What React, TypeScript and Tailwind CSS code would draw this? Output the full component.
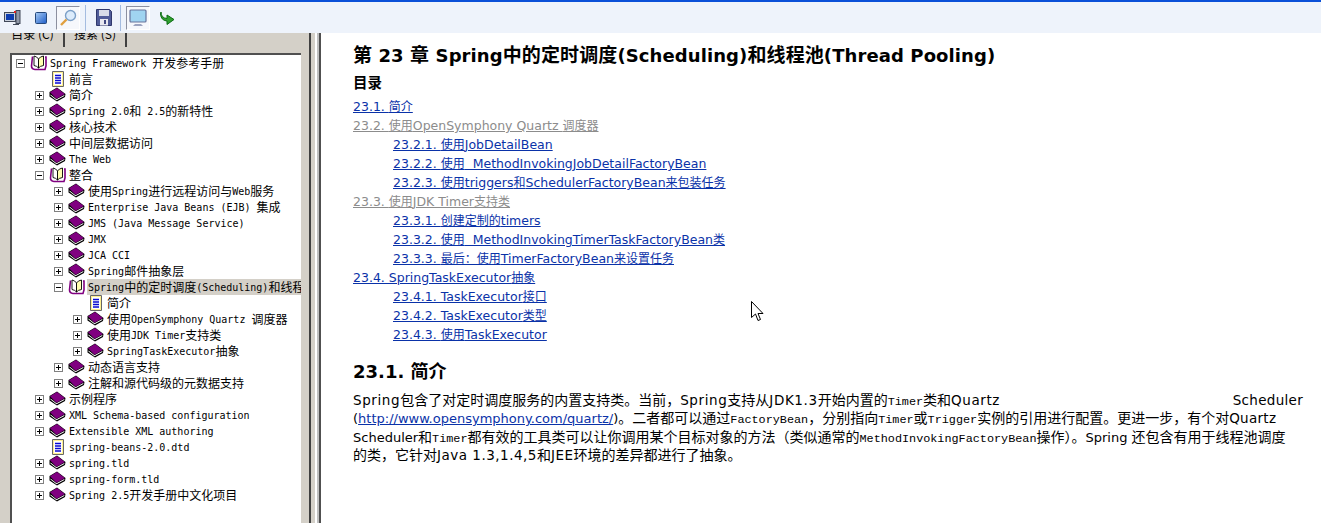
import React from 'react';

type Kind = 'book' | 'open' | 'doc';

interface TreeRow {
  level: number;
  kind: Kind;
  label: string;
  expander?: '+' | '-';
  selected?: boolean;
}

const rows: TreeRow[] = [
  { level: 0, kind: 'open', label: 'Spring Framework 开发参考手册', expander: '-' },
  { level: 1, kind: 'doc', label: '前言' },
  { level: 1, kind: 'book', label: '简介', expander: '+' },
  { level: 1, kind: 'book', label: 'Spring 2.0和 2.5的新特性', expander: '+' },
  { level: 1, kind: 'book', label: '核心技术', expander: '+' },
  { level: 1, kind: 'book', label: '中间层数据访问', expander: '+' },
  { level: 1, kind: 'book', label: 'The Web', expander: '+' },
  { level: 1, kind: 'open', label: '整合', expander: '-' },
  { level: 2, kind: 'book', label: '使用Spring进行远程访问与Web服务', expander: '+' },
  { level: 2, kind: 'book', label: 'Enterprise Java Beans (EJB) 集成', expander: '+' },
  { level: 2, kind: 'book', label: 'JMS (Java Message Service)', expander: '+' },
  { level: 2, kind: 'book', label: 'JMX', expander: '+' },
  { level: 2, kind: 'book', label: 'JCA CCI', expander: '+' },
  { level: 2, kind: 'book', label: 'Spring邮件抽象层', expander: '+' },
  { level: 2, kind: 'open', label: 'Spring中的定时调度(Scheduling)和线程池(Thread Pooling)', expander: '-', selected: true },
  { level: 3, kind: 'doc', label: '简介' },
  { level: 3, kind: 'book', label: '使用OpenSymphony Quartz 调度器', expander: '+' },
  { level: 3, kind: 'book', label: '使用JDK Timer支持类', expander: '+' },
  { level: 3, kind: 'book', label: 'SpringTaskExecutor抽象', expander: '+' },
  { level: 2, kind: 'book', label: '动态语言支持', expander: '+' },
  { level: 2, kind: 'book', label: '注解和源代码级的元数据支持', expander: '+' },
  { level: 1, kind: 'book', label: '示例程序', expander: '+' },
  { level: 1, kind: 'book', label: 'XML Schema-based configuration', expander: '+' },
  { level: 1, kind: 'book', label: 'Extensible XML authoring', expander: '+' },
  { level: 1, kind: 'doc', label: 'spring-beans-2.0.dtd' },
  { level: 1, kind: 'book', label: 'spring.tld', expander: '+' },
  { level: 1, kind: 'book', label: 'spring-form.tld', expander: '+' },
  { level: 1, kind: 'book', label: 'Spring 2.5开发手册中文化项目', expander: '+' },
];

const toc: { label: string; sub?: boolean; visited?: boolean }[] = [
  { label: '23.1. 简介' },
  { label: '23.2. 使用OpenSymphony Quartz 调度器', visited: true },
  { label: '23.2.1. 使用JobDetailBean', sub: true },
  { label: '23.2.2. 使用\u00a0 MethodInvokingJobDetailFactoryBean', sub: true },
  { label: '23.2.3. 使用triggers和SchedulerFactoryBean来包装任务', sub: true },
  { label: '23.3. 使用JDK Timer支持类', visited: true },
  { label: '23.3.1. 创建定制的timers', sub: true },
  { label: '23.3.2. 使用\u00a0 MethodInvokingTimerTaskFactoryBean类', sub: true },
  { label: '23.3.3. 最后：使用TimerFactoryBean来设置任务', sub: true },
  { label: '23.4. SpringTaskExecutor抽象' },
  { label: '23.4.1. TaskExecutor接口', sub: true },
  { label: '23.4.2. TaskExecutor类型', sub: true },
  { label: '23.4.3. 使用TaskExecutor', sub: true },
];

const indent = ['pl-[4px]', 'pl-[23px]', 'pl-[42px]', 'pl-[61px]'];

const BookIcon = () => (
  <svg width="18" height="16" viewBox="0 0 18 16" className="shrink-0">
    <path d="M0.5 5 L8 0.5 L16.5 7 L16 10 L8 14.5 L0.5 9.5 Z" fill="#000" />
    <path d="M1.5 8.5 L7.5 13.3 L15.3 9 L15.3 8 L7.5 12.3 L1.5 7.5 Z" fill="#fff" />
    <path d="M1 5.3 L8 1 L15.8 7.1 L7.5 11.8 Z" fill="#800080" />
  </svg>
);

const OpenBookIcon = () => (
  <svg width="18" height="16" viewBox="0 0 18 16" className="shrink-0">
    <path d="M2.5 1.5 L1.5 11 Q1.5 14 5 14.5 L15 14.5 L16 11 L16 2 L15 2" fill="none" stroke="#800080" strokeWidth="1.6" />
    <path d="M4 1 Q7 1.5 8.5 4 L8.5 13 Q7 11 4 10.5 Z" fill="#fff" stroke="#000" strokeWidth="0.9" />
    <path d="M13.5 1 Q10 1.5 8.5 4 L8.5 13 Q10 11 13.5 10.5 Z" fill="#ffffb0" stroke="#000" strokeWidth="0.9" />
  </svg>
);

const DocIcon = () => (
  <svg width="18" height="16" viewBox="0 0 18 16" className="shrink-0">
    <path d="M3.5 0.5 H14.5 V15.5 H3.5 Z" fill="#fff" stroke="#666" />
    <path d="M4.5 1.5 H13.5 V14.5 H4.5 Z" fill="none" stroke="#ffe020" strokeDasharray="1 1" />
    <path d="M6 4.5 H12 M6 7 H12 M6 9.5 H12 M6 12 H12" stroke="#0808d0" strokeWidth="1.3" />
  </svg>
);

const Expander = ({ type }: { type?: '+' | '-' }) => (
  <span className="flex h-[16px] w-[14px] shrink-0 items-center">
    {type && (
      <svg width="9" height="9" viewBox="0 0 9 9">
        <rect x="0.5" y="0.5" width="8" height="8" fill="#fff" stroke="#808080" />
        <path d="M2 4.5 H7" stroke="#000" />
        {type === '+' && <path d="M4.5 2 V7" stroke="#000" />}
      </svg>
    )}
  </span>
);

const CJK = /([\u3000-\u303f\u4e00-\u9fff\uff00-\uffef]+)/;

// CJK runs get their own size, the browser fonts here are not as wide as the original ones
const Split = ({ text, cjkClass, latinClass }: { text: string; cjkClass: string; latinClass?: string }) => (
  <>
    {text.split(CJK).map((part, i) =>
      CJK.test(part) ? (
        <span key={i} className={cjkClass}>{part}</span>
      ) : (
        <span key={i} className={latinClass}>{part}</span>
      ),
    )}
  </>
);

const Row = ({ row }: { row: TreeRow }) => (
  <div className={`flex h-[16px] items-center ${indent[row.level]}`}>
    <Expander type={row.expander} />
    {row.kind === 'book' && <BookIcon />}
    {row.kind === 'open' && <OpenBookIcon />}
    {row.kind === 'doc' && <DocIcon />}
    <span className={`ml-[1px] h-[16px] flex-1 overflow-hidden whitespace-pre pl-[1px] text-[12px] leading-[15px] text-black ${row.selected ? 'bg-[#d4d0c8]' : ''}`}>
      <Split text={row.label} cjkClass="text-[12px]" latinClass="align-[1px] font-['DejaVu_Sans_Mono',monospace] text-[10px]" />
    </span>
  </div>
);

const Code = ({ children }: { children: React.ReactNode }) => (
  <span className="font-['Liberation_Mono',monospace] text-[11.8px]">{children}</span>
);

const Body = ({ text, latinClass }: { text: string; latinClass?: string }) => (
  <Split text={text} cjkClass="text-[14px]" latinClass={latinClass} />
);

const Toolbar = () => (
  <div className="flex h-[31px] items-center bg-[#eef3fb] pl-[4px]">
    <svg width="17" height="15" viewBox="0 0 17 15">
      <rect x="0.5" y="2.5" width="11" height="9" fill="#c8d0dc" stroke="#404858" />
      <rect x="2" y="4" width="8" height="6" fill="#0c3cb0" />
      <rect x="12" y="0.5" width="4" height="13" fill="#9098a8" stroke="#404858" />
      <rect x="10" y="1" width="2" height="2" fill="#e02020" />
      <path d="M9 14.5 H15" stroke="#404858" />
    </svg>
    <svg className="ml-[14px]" width="12" height="12" viewBox="0 0 12 12">
      <defs>
        <linearGradient id="sq" x1="0" y1="0" x2="1" y2="1">
          <stop offset="0" stopColor="#a8ccf4" />
          <stop offset="1" stopColor="#1c5cc8" />
        </linearGradient>
      </defs>
      <rect x="0.5" y="0.5" width="11" height="11" rx="1" fill="url(#sq)" stroke="#24487c" />
    </svg>
    <span className="ml-[9px] flex h-[24px] w-[24px] items-center justify-center border border-t-[#8c90a0] border-l-[#8c90a0] border-r-white border-b-white bg-[#f6f8fc]">
      <svg width="18" height="18" viewBox="0 0 18 18">
        <circle cx="11.5" cy="6.5" r="5" fill="#dcecfc" stroke="#7ca0c8" strokeWidth="1.4" />
        <path d="M7.5 10.5 L2 16" stroke="#e0a040" strokeWidth="2.4" />
      </svg>
    </span>
    <span className="ml-[5px] h-[26px] w-px bg-[#a4bce0]" />
    <svg className="ml-[10px]" width="16" height="17" viewBox="0 0 16 17">
      <path d="M0.5 0.5 H13.5 L15.5 2.5 V16.5 H0.5 Z" fill="#505c98" stroke="#30386c" />
      <rect x="3" y="1" width="10" height="6" fill="#d8dce8" />
      <rect x="4" y="10" width="8" height="6.5" fill="#e8e8f0" />
      <rect x="8" y="11" width="2" height="4" fill="#404880" />
    </svg>
    <span className="ml-[8px] h-[26px] w-px bg-[#a4bce0]" />
    <span className="ml-[5px] flex h-[24px] w-[24px] items-center justify-center border border-t-[#8c90a0] border-l-[#8c90a0] border-r-white border-b-white bg-[#f6f8fc]">
      <svg width="18" height="18" viewBox="0 0 18 18">
        <rect x="1" y="1" width="16" height="12" rx="1" fill="#a0d4f0" stroke="#68749c" strokeWidth="1.2" />
        <path d="M6 15 H12 L14 17 H4 Z" fill="#9ca4c0" />
      </svg>
    </span>
    <svg className="ml-[10px]" width="15" height="14" viewBox="0 0 15 14">
      <path d="M1 1 Q1 7 7 7.5 L7 4 L14 8.5 L7 13.5 L7 10 Q1 9.5 0.5 3 Z" fill="#30a030" stroke="#0c6c14" strokeWidth="1" />
    </svg>
  </div>
);

const Sidebar = () => (
  <div className="flex h-full w-[321px] shrink-0 bg-[#d4d0c8] font-['Noto_Sans_CJK_SC',sans-serif]">
    <div className="flex h-full w-[311px] flex-col border-r-2 border-r-[#404040]">
      <div className="flex h-[14px] items-end pl-[2px]">
        <span className="flex h-[14px] w-[63px] items-end justify-center overflow-hidden border-r-2 border-r-[#404040] pb-[5px] text-[12px] leading-[16px] text-black">目录 (C)</span>
        <span className="flex h-[14px] w-[62px] items-end justify-center overflow-hidden border-r-2 border-r-[#404040] pb-[5px] text-[12px] leading-[16px] text-black">搜索 (S)</span>
      </div>
      <div className="flex min-h-0 flex-1 flex-col pt-[6px] pl-[10px] pr-[8px]">
        <div className="min-h-0 flex-1 overflow-hidden border-t-2 border-l-2 border-t-[#505050] border-l-[#505050] bg-white">
          {rows.map((row, i) => (
            <Row key={i} row={row} />
          ))}
        </div>
      </div>
    </div>
    <div className="ml-[4px] h-full w-[6px] border-l-2 border-r-2 border-l-white border-r-[#505050] bg-[#c0c0c0]" />
  </div>
);

const Content = () => (
  <div className="min-w-0 flex-1 bg-white pt-[10px] pl-[32px] font-['DejaVu_Sans','Noto_Sans_CJK_SC',sans-serif] text-[13px] text-black">
    <h1 className="h-[24px] whitespace-nowrap text-[18px] font-bold leading-[24px] tracking-[0.1px]">
      <Split text="第 23 章 Spring中的定时调度(Scheduling)和线程池(Thread Pooling)" cjkClass="text-[19px]" />
    </h1>
    <h2 className="mt-[5px] h-[22px] text-[14.5px] font-bold leading-[22px]">目录</h2>
    <div className="mt-[3px]">
      {toc.map(item => (
        <div key={item.label} className={`h-[19px] whitespace-nowrap text-[12.5px] leading-[19px] ${item.sub ? 'pl-[40px]' : ''}`}>
          <span className={`underline ${item.visited ? 'text-[#8c8c8c]' : 'text-[#0a32a8]'}`}>
            <Split text={item.label} cjkClass="text-[12px]" />
          </span>
        </div>
      ))}
    </div>
    <h2 className="mt-[16px] h-[24px] text-[18px] font-bold leading-[24px]">23.1. 简介</h2>
    <div className="mt-[7px] w-[950px] text-[13px] leading-[18.4px]">
      <div className="flex h-[18.4px] justify-between whitespace-pre">
        <span>
          <Body text="Spring包含了对定时调度服务的内置支持类。当前，Spring支持从JDK1.3开始内置的" latinClass="text-[13.5px] tracking-[0.6px]" /><Code>Timer</Code><Body text="类和Quartz" latinClass="text-[13.5px] tracking-[0.6px]" />
        </span>
        <span className="text-[13.5px] tracking-[0.3px]">Scheduler</span>
      </div>
      <div className="h-[18.4px] whitespace-pre">
        (<span className="text-[#0a32a8] underline">http://www.opensymphony.com/quartz/</span>)<Body text="。二者都可以通过" /><Code>FactoryBean</Code><Body text="，分别指向" /><Code>Timer</Code><Body text="或" /><Code>Trigger</Code><Body text="实例的引用进行配置。更进一步，有个对Quartz" latinClass="text-[13.5px] tracking-[0.3px]" />
      </div>
      <div className="h-[18.4px] whitespace-pre">
        <Body text="Scheduler和" /><Code>Timer</Code><Body text="都有效的工具类可以让你调用某个目标对象的方法（类似通常的" /><Code>MethodInvokingFactoryBean</Code><Body text="操作）。Spring 还包含有用于线程池调度" />
      </div>
      <div className="h-[18.4px] whitespace-pre">
        <Body text="的类，它针对Java 1.3,1.4,5和JEE环境的差异都进行了抽象。" latinClass="text-[13.5px] tracking-[0.5px]" />
      </div>
    </div>
  </div>
);

export default function App() {
  return (
    <div className="relative flex h-[523px] w-[1321px] flex-col overflow-hidden bg-white">
      <div className="h-[2px] bg-[#0a50d8]" />
      <Toolbar />
      <div className="flex min-h-0 flex-1">
        <Sidebar />
        <Content />
      </div>
      {/* mouse pointer sitting over the page */}
      <svg className="absolute left-[751px] top-[301px]" width="13" height="21" viewBox="0 0 13 21">
        <path d="M0.5 0.5 V16.5 L4.5 13 L7 19.5 L9.5 18.5 L7 12.5 L12 12.5 Z" fill="#fff" stroke="#000" />
      </svg>
    </div>
  );
}
